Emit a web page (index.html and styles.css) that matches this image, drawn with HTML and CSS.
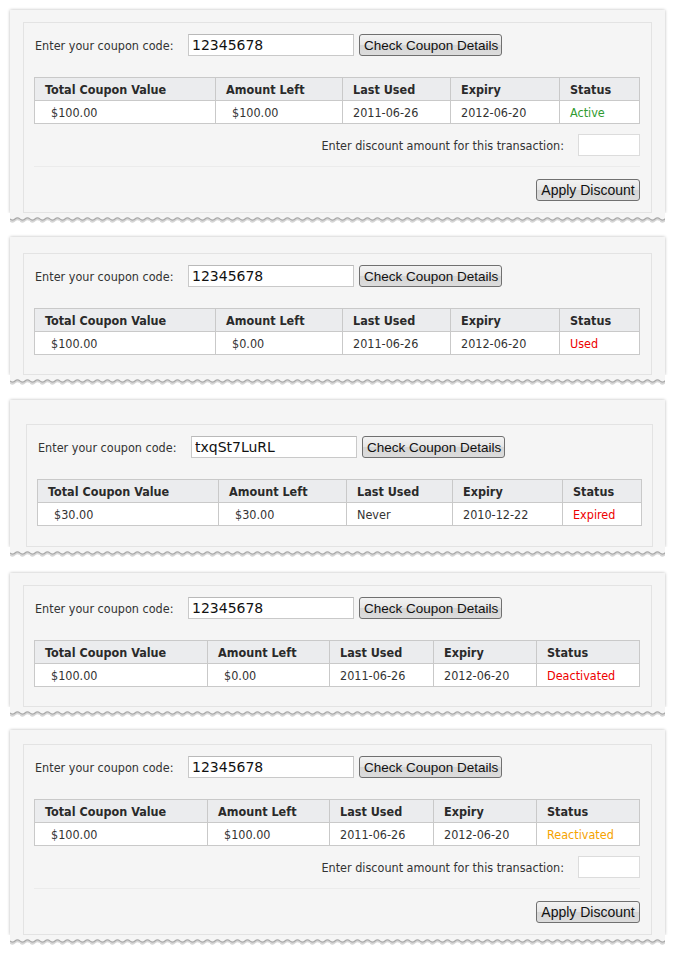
FILE: index.html
```html
<!DOCTYPE html>
<html>
<head>
<meta charset="utf-8">
<link rel="stylesheet" href="styles.css">
</head>
<body>
<div class="page">

  <div class="panel p1">
    <div class="panel-body">
      <div class="inner">
        <div class="code-row">
          <span class="lbl">Enter your coupon code:</span>
          <input class="code" type="text" value="12345678">
          <button class="btn">Check Coupon Details</button>
        </div>
        <table class="info cols-a">
          <colgroup><col class="c1"><col class="c2"><col class="c3"><col class="c4"><col></colgroup>
          <tr><th>Total Coupon Value</th><th>Amount Left</th><th>Last Used</th><th>Expiry</th><th>Status</th></tr>
          <tr><td class="money">$100.00</td><td class="money">$100.00</td><td>2011-06-26</td><td>2012-06-20</td><td class="st-active">Active</td></tr>
        </table>
        <div class="discount-row">
          <span class="lbl">Enter discount amount for this transaction:</span>
          <input class="amount" type="text">
        </div>
        <div class="sep"></div>
        <div class="apply-row"><button class="btn">Apply Discount</button></div>
      </div>
    </div>
    <svg class="wave" width="100%" height="12">
      <defs><pattern id="w1" width="10" height="12" patternUnits="userSpaceOnUse">
        <path d="M0 0H10V6Q7.5 3.6 5 6T0 6Z" fill="#f5f5f5"/>
        <path d="M0 7.4Q2.5 9.8 5 7.4T10 7.4" fill="none" stroke="#d6d6d6" stroke-width="2"/>
        <path d="M0 6Q2.5 8.4 5 6T10 6" fill="none" stroke="#a6a6a6" stroke-width="1.2"/>
      </pattern></defs>
      <rect width="100%" height="12" fill="url(#w1)"/>
    </svg>
  </div>

  <div class="panel p2">
    <div class="panel-body">
      <div class="inner short">
        <div class="code-row">
          <span class="lbl">Enter your coupon code:</span>
          <input class="code" type="text" value="12345678">
          <button class="btn">Check Coupon Details</button>
        </div>
        <table class="info cols-a">
          <colgroup><col class="c1"><col class="c2"><col class="c3"><col class="c4"><col></colgroup>
          <tr><th>Total Coupon Value</th><th>Amount Left</th><th>Last Used</th><th>Expiry</th><th>Status</th></tr>
          <tr><td class="money">$100.00</td><td class="money">$0.00</td><td>2011-06-26</td><td>2012-06-20</td><td class="st-bad">Used</td></tr>
        </table>
      </div>
    </div>
    <svg class="wave" width="100%" height="12">
      <defs><pattern id="w2" width="10" height="12" patternUnits="userSpaceOnUse">
        <path d="M0 0H10V6Q7.5 3.6 5 6T0 6Z" fill="#f5f5f5"/>
        <path d="M0 7.4Q2.5 9.8 5 7.4T10 7.4" fill="none" stroke="#d6d6d6" stroke-width="2"/>
        <path d="M0 6Q2.5 8.4 5 6T10 6" fill="none" stroke="#a6a6a6" stroke-width="1.2"/>
      </pattern></defs>
      <rect width="100%" height="12" fill="url(#w2)"/>
    </svg>
  </div>

  <div class="panel p3">
    <div class="panel-body">
      <div class="inner short">
        <div class="code-row">
          <span class="lbl">Enter your coupon code:</span>
          <input class="code" type="text" value="txqSt7LuRL">
          <button class="btn">Check Coupon Details</button>
        </div>
        <table class="info cols-c">
          <colgroup><col class="c1"><col class="c2"><col class="c3"><col class="c4"><col></colgroup>
          <tr><th>Total Coupon Value</th><th>Amount Left</th><th>Last Used</th><th>Expiry</th><th>Status</th></tr>
          <tr><td class="money">$30.00</td><td class="money">$30.00</td><td>Never</td><td>2010-12-22</td><td class="st-bad">Expired</td></tr>
        </table>
      </div>
    </div>
    <svg class="wave" width="100%" height="12">
      <defs><pattern id="w3" width="10" height="12" patternUnits="userSpaceOnUse">
        <path d="M0 0H10V6Q7.5 3.6 5 6T0 6Z" fill="#f5f5f5"/>
        <path d="M0 7.4Q2.5 9.8 5 7.4T10 7.4" fill="none" stroke="#d6d6d6" stroke-width="2"/>
        <path d="M0 6Q2.5 8.4 5 6T10 6" fill="none" stroke="#a6a6a6" stroke-width="1.2"/>
      </pattern></defs>
      <rect width="100%" height="12" fill="url(#w3)"/>
    </svg>
  </div>

  <div class="panel p4">
    <div class="panel-body">
      <div class="inner short">
        <div class="code-row">
          <span class="lbl">Enter your coupon code:</span>
          <input class="code" type="text" value="12345678">
          <button class="btn">Check Coupon Details</button>
        </div>
        <table class="info cols-b">
          <colgroup><col class="c1"><col class="c2"><col class="c3"><col class="c4"><col></colgroup>
          <tr><th>Total Coupon Value</th><th>Amount Left</th><th>Last Used</th><th>Expiry</th><th>Status</th></tr>
          <tr><td class="money">$100.00</td><td class="money">$0.00</td><td>2011-06-26</td><td>2012-06-20</td><td class="st-bad">Deactivated</td></tr>
        </table>
      </div>
    </div>
    <svg class="wave" width="100%" height="12">
      <defs><pattern id="w4" width="10" height="12" patternUnits="userSpaceOnUse">
        <path d="M0 0H10V6Q7.5 3.6 5 6T0 6Z" fill="#f5f5f5"/>
        <path d="M0 7.4Q2.5 9.8 5 7.4T10 7.4" fill="none" stroke="#d6d6d6" stroke-width="2"/>
        <path d="M0 6Q2.5 8.4 5 6T10 6" fill="none" stroke="#a6a6a6" stroke-width="1.2"/>
      </pattern></defs>
      <rect width="100%" height="12" fill="url(#w4)"/>
    </svg>
  </div>

  <div class="panel p5">
    <div class="panel-body">
      <div class="inner">
        <div class="code-row">
          <span class="lbl">Enter your coupon code:</span>
          <input class="code" type="text" value="12345678">
          <button class="btn">Check Coupon Details</button>
        </div>
        <table class="info cols-b">
          <colgroup><col class="c1"><col class="c2"><col class="c3"><col class="c4"><col></colgroup>
          <tr><th>Total Coupon Value</th><th>Amount Left</th><th>Last Used</th><th>Expiry</th><th>Status</th></tr>
          <tr><td class="money">$100.00</td><td class="money">$100.00</td><td>2011-06-26</td><td>2012-06-20</td><td class="st-re">Reactivated</td></tr>
        </table>
        <div class="discount-row">
          <span class="lbl">Enter discount amount for this transaction:</span>
          <input class="amount" type="text">
        </div>
        <div class="sep"></div>
        <div class="apply-row"><button class="btn">Apply Discount</button></div>
      </div>
    </div>
    <svg class="wave" width="100%" height="12">
      <defs><pattern id="w5" width="10" height="12" patternUnits="userSpaceOnUse">
        <path d="M0 0H10V6Q7.5 3.6 5 6T0 6Z" fill="#f5f5f5"/>
        <path d="M0 7.4Q2.5 9.8 5 7.4T10 7.4" fill="none" stroke="#d6d6d6" stroke-width="2"/>
        <path d="M0 6Q2.5 8.4 5 6T10 6" fill="none" stroke="#a6a6a6" stroke-width="1.2"/>
      </pattern></defs>
      <rect width="100%" height="12" fill="url(#w5)"/>
    </svg>
  </div>

</div>
</body>
</html>
```

FILE: styles.css
```css
html, body {
  margin: 0;
  padding: 0;
  background: #ffffff;
}

.page {
  padding: 10px 10px 0;
  font-family: "DejaVu Sans Condensed", "DejaVu Sans", sans-serif;
  font-size: 12.5px;
  color: #333333;
}

.panel {
  margin-bottom: 12px;
}

.p2 { margin-bottom: 13px; }
.p3 { margin-bottom: 14px; }
.p4 { margin-bottom: 11px; }

.panel-body {
  background: #f5f5f5;
  padding: 12px 13px 0;
  box-shadow: 0 0 3px rgba(0, 0, 0, 0.28);
  clip-path: inset(-6px -6px 0 -6px);
}

.p2 .panel-body { padding-top: 16px; }
.p3 .panel-body { padding: 24px 12px 0 16px; }
.p5 .panel-body { padding-top: 14px; }

.wave {
  display: block;
  width: 100%;
  height: 12px;
}

.inner {
  border: 1px solid #e3e3e3;
  padding: 11px 11px 11px 10px;
}

.inner.short { padding-bottom: 19px; }
.p3 .inner.short { padding: 11px 10px 20px; }

.code-row {
  display: flex;
  align-items: center;
  height: 22px;
  padding-left: 1px;
}

.lbl {
  white-space: nowrap;
}

.code-row .lbl {
  width: 153px;
  flex: none;
}

.code {
  box-sizing: border-box;
  width: 166px;
  height: 22px;
  margin: 0;
  padding: 0 3px;
  border: 1px solid #c9c9c9;
  border-top-color: #b9b9b9;
  background: #ffffff;
  font-family: "DejaVu Sans", sans-serif;
  font-size: 14px;
  color: #111111;
  outline: none;
}

.btn {
  box-sizing: border-box;
  height: 22px;
  margin: 0;
  padding: 0 4px;
  border: 1px solid #707070;
  border-radius: 3px;
  background: linear-gradient(#f3f3f3, #e6e6e6 50%, #d6d6d6 51%, #dcdcdc);
  font-family: "Liberation Sans", Arial, sans-serif;
  font-size: 13.5px;
  color: #111111;
  white-space: nowrap;
}

.code-row .btn {
  margin-left: 5px;
  width: 143px;
}

.info {
  width: 100%;
  margin-top: 21px;
  border-collapse: collapse;
  table-layout: fixed;
  background: #ffffff;
}

.info th,
.info td {
  height: 22px;
  padding: 0 0 0 10px;
  border: 1px solid #c9c9c9;
  text-align: left;
  white-space: nowrap;
  overflow: hidden;
}

.info th {
  background: #ebecee;
  font-weight: bold;
  color: #2a2a2a;
}

.info td {
  color: #333333;
}

.info td.money {
  padding-left: 16px;
}

.cols-a .c1 { width: 181px; }
.cols-a .c2 { width: 127px; }
.cols-a .c3 { width: 108px; }
.cols-a .c4 { width: 109px; }

.cols-c .c1 { width: 181px; }
.cols-c .c2 { width: 128px; }
.cols-c .c3 { width: 106px; }
.cols-c .c4 { width: 110px; }

.cols-b .c1 { width: 173px; }
.cols-b .c2 { width: 122px; }
.cols-b .c3 { width: 104px; }
.cols-b .c4 { width: 103px; }

.info td.st-active { color: #2f9a2f; }
.info td.st-bad { color: #ee0000; }
.info td.st-re { color: #f5a300; }

.discount-row {
  display: flex;
  justify-content: flex-end;
  align-items: center;
  gap: 14px;
  height: 22px;
  margin-top: 10px;
}

.amount {
  box-sizing: border-box;
  width: 62px;
  height: 22px;
  margin: 0;
  border: 1px solid #dcdcdc;
  background: #ffffff;
  outline: none;
}

.sep {
  height: 1px;
  margin-top: 10px;
  background: #ebebeb;
}

.apply-row {
  display: flex;
  justify-content: flex-end;
  margin-top: 12px;
}

.apply-row .btn {
  width: 104px;
  padding: 0;
  font-size: 14px;
}
```
